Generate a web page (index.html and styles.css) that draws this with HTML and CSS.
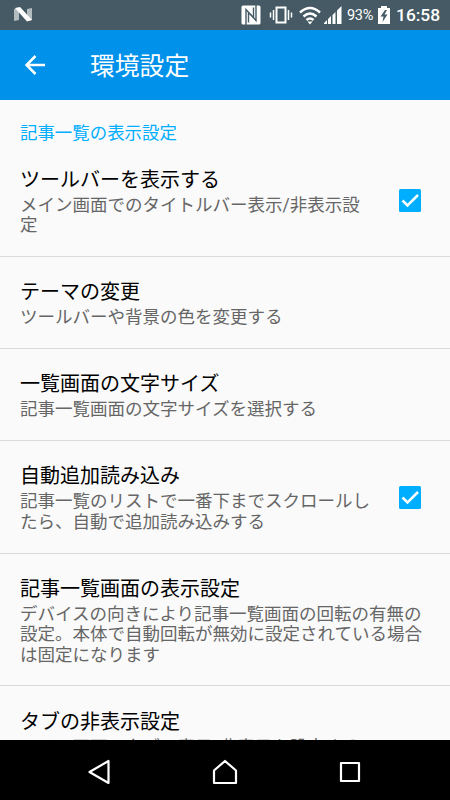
FILE: index.html
```
<!DOCTYPE html>
<html lang="ja">
<head>
    <meta charset="UTF-8">
    <title>環境設定</title>
    <link rel="stylesheet" href="styles.css">
</head>
<body>
    <div class="status-bar">
        <svg class="n-logo" width="20" height="16" viewBox="0 0 20 16">
            <path d="M1 2l5-1v12l-5 1zM14 2l5-1v12l-5 1z" fill="#b3bcc0"/>
            <path d="M2 1l5-1 12 13-5 1.500z" fill="#fff"/>
        </svg>
        <div class="status-icons">
            <svg class="nfc" width="20" height="20" viewBox="0 0 20 20">
                <rect x=".5" y=".5" width="19" height="19" rx="1.500" fill="#fff"/>
                <path d="M5 20V4.500L13 13M7.500 8V17.500M15 0V15.500L7 7M12.500 12V2.500" fill="none" stroke="#455a64" stroke-width="1.400"/>
            </svg>
            <svg class="vibrate" width="24" height="20" viewBox="0 0 24 20" fill="none" stroke="#fff" stroke-width="2">
                <rect x="7.500" y="2.500" width="9" height="15"/>
                <path d="M4.500 5v10M1.500 7.500v5M19.500 5v10M22.500 7.500v5" stroke-width="1.500"/>
            </svg>
            <svg class="wifi" width="22" height="19" viewBox="0 0 22 19" fill="none" stroke="#fff" stroke-width="2.500">
                <path d="M1 6.500Q11-2.500 21 6.500M4.500 10.500Q11 4.500 17.500 10.500M7.500 14Q11 11 14.500 14"/>
                <path d="M8.500 15.500h5L11 18.500z" fill="#fff" stroke="none"/>
            </svg>
            <svg class="signal" width="18" height="18" viewBox="0 0 18 18" fill="#fff">
                <path d="M0 18v-1l3-3v4zM4 18v-5l3-3v8zM8.500 18V9l3-3v12zM13 18V4.500L17.500 0v18z"/>
            </svg>
            <span class="percent">93%</span>
            <svg class="battery" width="12" height="18" viewBox="0 0 12 18">
                <path d="M3 0h6v2h3v16H0V2h3z" fill="#fff"/>
                <path d="M7 4L2.500 10.500H5.500L4.500 16 9.500 8.500H6.500L9 4z" fill="#455a64"/>
            </svg>
            <span class="clock">16:58</span>
        </div>
    </div>

    <header class="toolbar">
        <svg class="back" width="20" height="20" viewBox="0 0 20 20" fill="none" stroke="#fff" stroke-width="2.500">
            <path d="M20 10H2M10.500 1L1.500 10l9 9"/>
        </svg>
        <h1>環境設定</h1>
    </header>

    <main class="settings">
        <h2 class="category">記事一覧の表示設定</h2>
        <div class="item">
            <div class="text">
                <h3>ツールバーを表示する</h3>
                <p>メイン画面でのタイトルバー表示/非表示設定</p>
            </div>
            <svg class="checkbox" width="22" height="23" viewBox="0 0 22 23">
                <rect width="22" height="23" rx="1.500" fill="#00aeff"/>
                <path d="M3.500 11.500l5 5L19 6" fill="none" stroke="#fff" stroke-width="2.500"/>
            </svg>
        </div>
        <div class="item">
            <div class="text">
                <h3>テーマの変更</h3>
                <p>ツールバーや背景の色を変更する</p>
            </div>
        </div>
        <div class="item">
            <div class="text">
                <h3>一覧画面の文字サイズ</h3>
                <p>記事一覧画面の文字サイズを選択する</p>
            </div>
        </div>
        <div class="item">
            <div class="text">
                <h3>自動追加読み込み</h3>
                <p>記事一覧のリストで一番下までスクロールしたら、自動で追加読み込みする</p>
            </div>
            <svg class="checkbox" width="22" height="23" viewBox="0 0 22 23">
                <rect width="22" height="23" rx="1.500" fill="#00aeff"/>
                <path d="M3.500 11.500l5 5L19 6" fill="none" stroke="#fff" stroke-width="2.500"/>
            </svg>
        </div>
        <div class="item">
            <div class="text">
                <h3>記事一覧画面の表示設定</h3>
                <p>デバイスの向きにより記事一覧画面の回転の有無の設定。本体で自動回転が無効に設定されている場合は固定になります</p>
            </div>
        </div>
        <div class="item">
            <div class="text">
                <h3>タブの非表示設定</h3>
                <p>メイン画面のタブの表示/非表示を設定する</p>
            </div>
        </div>
    </main>

    <nav class="nav-bar">
        <svg width="24" height="26" viewBox="0 0 24 26"><path d="M21.500 2v22L2.500 13z"/></svg>
        <svg width="26" height="26" viewBox="0 0 26 26"><path d="M2 24V11.500L13 2l11 9.500V24z"/></svg>
        <svg width="22" height="22" viewBox="0 0 22 22"><path d="M2 2h18v18H2z"/></svg>
    </nav>
</body>
</html>
```
FILE: styles.css
```
*
{
    box-sizing: border-box;
    margin: 0;
    padding: 0;
}

body
{
    display: flex;
    flex-direction: column;
    height: 800px;
    overflow: hidden;
    background-color: #fafafa;
    font-family: Roboto, "Noto Sans CJK JP", sans-serif;
}

h1, h2, h3
{
    font-weight: 400;
}

.status-bar
{
    display: flex;
    flex: none;
    align-items: center;
    justify-content: space-between;
    height: 30px;
    padding: 0 10px 0 13px;
    background-color: #455a64;
    color: #fff;
}

.status-icons
{
    display: flex;
    align-items: center;
}

.vibrate { margin-left: 8px; }
.wifi { margin-left: 6px; }
.signal { margin-left: 3px; }

.percent
{
    width: 27px;
    margin-left: 5px;
    font-size: 14.5px;
    letter-spacing: -0.3px;
}

.battery { margin-left: 4px; }

.clock
{
    width: 44px;
    margin-left: 6px;
    font-size: 17.4px;
    font-weight: 500;
}

.toolbar
{
    display: flex;
    flex: none;
    align-items: center;
    height: 70px;
    padding-left: 25px;
    background-color: #0091ea;
    color: #fff;
}

.toolbar h1
{
    margin-left: 45px;
    padding-top: 4px;
    font-size: 24.8px;
    line-height: 36px;
}

.settings
{
    flex: 1;
    min-height: 0;
    overflow: hidden;
}

.category
{
    height: 44.8px;
    padding: 21px 20px 0;
    color: #00aeff;
    font-size: 17.45px;
    line-height: 24px;
}

.item
{
    display: flex;
    align-items: center;
    padding: 21.2px 20px 20.4px;
    border-bottom: 1px solid #d9d9d9;
}

.text
{
    flex: 1;
}

.item h3
{
    color: #000;
    font-size: 20px;
    line-height: 29px;
}

.item p
{
    color: #666;
    font-size: 17.5px;
    line-height: 20.4px;
}

.checkbox
{
    flex: none;
    margin: 0 9px 0 29px;
}

.nav-bar
{
    display: flex;
    flex: none;
    align-items: center;
    justify-content: space-between;
    height: 60px;
    padding: 4px 89px 0 87px;
    background-color: #000;
}

.nav-bar path
{
    fill: none;
    stroke: #fff;
    stroke-width: 2.2;
    stroke-linejoin: round;
}
```
